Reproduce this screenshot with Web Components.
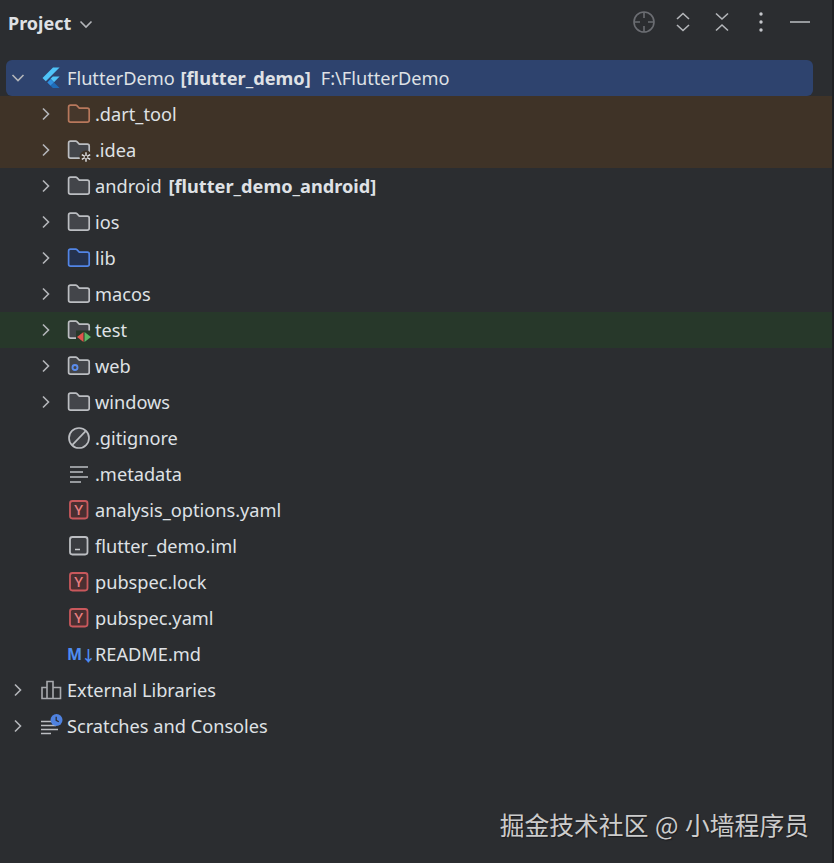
<!DOCTYPE html>
<html>
<head>
<meta charset="utf-8">
<title>Project</title>
<style>
    html, body { height: 100%; }
    body {
        margin: 0;
        background: #2b2d30;
        color: #dfe1e5;
        font-family: "Noto Sans", "Noto Sans CJK SC", sans-serif;
    }
</style>
</head>
<body>
<project-panel>
    <panel-header title-text="Project"></panel-header>
    <tree-row selected expanded icon="flutter" depth="0">FlutterDemo <b style="margin-left:1px">[flutter_demo]</b><span style="margin-left:10px">F:\FlutterDemo</span></tree-row>
    <tree-row chevron icon="folder-orange" depth="1" tint="brown">.dart_tool</tree-row>
    <tree-row chevron icon="folder-idea" depth="1" tint="brown">.idea</tree-row>
    <tree-row chevron icon="folder" depth="1">android <b style="margin-left:2px">[flutter_demo_android]</b></tree-row>
    <tree-row chevron icon="folder" depth="1">ios</tree-row>
    <tree-row chevron icon="folder-blue" depth="1">lib</tree-row>
    <tree-row chevron icon="folder" depth="1">macos</tree-row>
    <tree-row chevron icon="folder-test" depth="1" tint="green">test</tree-row>
    <tree-row chevron icon="folder-web" depth="1">web</tree-row>
    <tree-row chevron icon="folder" depth="1">windows</tree-row>
    <tree-row icon="ignore" depth="1">.gitignore</tree-row>
    <tree-row icon="lines" depth="1">.metadata</tree-row>
    <tree-row icon="yaml" depth="1">analysis_options.yaml</tree-row>
    <tree-row icon="iml" depth="1">flutter_demo.iml</tree-row>
    <tree-row icon="yaml" depth="1">pubspec.lock</tree-row>
    <tree-row icon="yaml" depth="1">pubspec.yaml</tree-row>
    <tree-row icon="markdown" depth="1">README.md</tree-row>
    <tree-row chevron icon="library" depth="0">External Libraries</tree-row>
    <tree-row chevron icon="scratches" depth="0">Scratches and Consoles</tree-row>
    <water-mark slot="overlay">掘金技术社区 @ 小墙程序员</water-mark>
</project-panel>

<script>
const folderPath = "M3.5 3.2h5.2c.5 0 .9.2 1.2.5l2.4 2.4h8c1.1 0 1.9.8 1.9 1.9v10.2c0 1.1-.8 1.9-1.9 1.9H3.5c-1.1 0-1.9-.8-1.9-1.9V5.1c0-1.1.8-1.9 1.9-1.9z";

function folder(stroke, fill, extra = "") {
    return `<path d="${folderPath}" fill="${fill}" stroke="${stroke}" stroke-width="1.7"/>${extra}`;
}

const icons = {
    "flutter": `<path d="M14 1.5h6.6L6.8 15.3l-3.3-3.3z" fill="#4fc3f7"/>
        <path d="M13.8 10.6h6.8l-5.6 5.6-3.4-3.4z" fill="#4fc3f7"/>
        <path d="M8.3 16.4l3.3-3.4 3.4 3.4-3.4 3.3z" fill="#2f8fe0"/>
        <path d="M11.6 19.7l3.4-3.3 5.6 5.6h-6.8z" fill="#1f6cb8"/>`,
    "folder": folder("#bcbec2", "#43454a"),
    "folder-orange": folder("#b8785c", "#46372b"),
    "folder-blue": folder("#5285e6", "#25324d"),
    "folder-idea": folder("#bcbec2", "#43454a",
        `<circle cx="19" cy="19" r="6.5" fill="#3f3327"/>
        <path d="M19 14.2v9.6M14.8 16.6l8.4 4.8M23.2 16.6l-8.4 4.8" stroke="#e4e5e8" stroke-width="1.4"/>
        <circle cx="19" cy="19" r="1.3" fill="#3f3327"/>`),
    "folder-test": folder("#bcbec2", "#43454a",
        `<path d="M9 12.5h15V24H9z" fill="#27382a"/>
        <path d="M16.5 14v10L10 19z" fill="#e0544c"/>
        <path d="M17.5 14v10l6.5-5z" fill="#5cb565"/>`),
    "folder-web": folder("#bcbec2", "#43454a",
        `<circle cx="8" cy="13.5" r="2.5" fill="none" stroke="#5b8def" stroke-width="1.9"/>`),
    "ignore": `<circle cx="12" cy="12" r="10" fill="#3c3e42" stroke="#bcbec2" stroke-width="1.7"/>
        <path d="M5.4 18.9L18.6 5.1" stroke="#bcbec2" stroke-width="1.7"/>`,
    "lines": `<path d="M3 5h18M3 10h13M3 15h18M3 20h11" stroke="#bcbec2" stroke-width="1.6"/>`,
    "yaml": `<rect x="3" y="3" width="17.5" height="17.5" rx="2.4" fill="#4a2f31" stroke="#c9585c" stroke-width="1.8"/>
        <text x="11.75" y="17.4" text-anchor="middle" font-size="15" font-weight="500" fill="#ea8082" font-family="'Noto Sans', sans-serif">Y</text>`,
    "iml": `<rect x="3" y="3" width="17.5" height="17.5" rx="2.4" fill="#3a3c40" stroke="#bcbec2" stroke-width="1.8"/>
        <path d="M8 15.5h5" stroke="#c8cacd" stroke-width="1.5"/>`,
    "library": `<path d="M2 9.5h5v11H2zM7 3.5h6v17H7zM13 9.5h7.5v11H13z" transform="translate(1 0)" fill="none" stroke="#a8aaae" stroke-width="1.6"/>`,
    "scratches": `<path d="M2 7.5h11M2 11.5h15M2 15.5h17M2 19.5h10" stroke="#bcbec2" stroke-width="1.6"/>
        <circle cx="17.5" cy="6" r="6" fill="#4f82e0"/>
        <path d="M17.2 2.8v3.5l2.6 1.5" fill="none" stroke="#2b2d30" stroke-width="1.3"/>`
};

class ProjectPanel extends HTMLElement {
    constructor() {
        super();
        this.attachShadow({mode: "open"});
        this.shadowRoot.innerHTML = `
            <style>
                :host {
                    display: flex;
                    flex-direction: column;
                    position: relative;
                    height: 100%;
                    min-height: 863px;
                    box-sizing: border-box;
                    border-right: 2px solid #1f2023;
                    overflow: hidden;
                }
            </style>
            <slot></slot>
            <slot name="overlay"></slot>
        `;
    }
}

class PanelHeader extends HTMLElement {
    constructor() {
        super();
        this.attachShadow({mode: "open"});
        this.shadowRoot.innerHTML = `
            <style>
                :host {
                    display: flex;
                    align-items: center;
                    height: 48px;
                    margin-bottom: 12px;
                    padding: 0 20px 0 8px;
                    box-sizing: border-box;
                    color: #dfe1e5;
                }
                #title {
                    font-size: 18px;
                    font-weight: 700;
                    margin-bottom: 2px;
                }
                #caret { margin-left: 3px; }
                #actions {
                    display: flex;
                    gap: 15px;
                    margin-left: auto;
                    margin-bottom: 4px;
                }
                svg { display: block; width: 24px; height: 24px; fill: none; stroke: #b4b6ba; stroke-width: 1.6; }
            </style>
            <span id="title"></span>
            <svg id="caret" viewBox="0 0 24 24"><path d="M6.5 9.5l5.5 5.5 5.5-5.5"/></svg>
            <div id="actions">
                <svg viewBox="0 0 24 24" style="stroke:#6b6d72"><circle cx="12" cy="12" r="10"/><path d="M12 2v6M12 16v6M2 12h6M16 12h6"/></svg>
                <svg viewBox="0 0 24 24"><path d="M6 9l6-5.5L18 9M6 15l6 5.5L18 15"/></svg>
                <svg viewBox="0 0 24 24"><path d="M6 3.5L12 9l6-5.5M6 20.5L12 15l6 5.5"/></svg>
                <svg viewBox="0 0 24 24"><circle cx="12" cy="4" r="1.7" fill="#c4c6ca" stroke="none"/><circle cx="12" cy="12" r="1.7" fill="#c4c6ca" stroke="none"/><circle cx="12" cy="20" r="1.7" fill="#c4c6ca" stroke="none"/></svg>
                <svg viewBox="0 0 24 24"><path d="M2 12h20"/></svg>
            </div>
        `;
        this.shadowRoot.getElementById("title").textContent = this.getAttribute("title-text");
    }
}

class TreeRow extends HTMLElement {
    constructor() {
        super();
        this.attachShadow({mode: "open"});
        this.shadowRoot.innerHTML = `
            <style>
                :host {
                    display: flex;
                    align-items: center;
                    flex: none;
                    height: 36px;
                    padding-left: calc(8px + 28px * var(--depth, 0));
                    box-sizing: border-box;
                    font-size: 18.2px;
                    white-space: nowrap;
                    color: #dfe1e5;
                }
                :host([tint="brown"]) { background: #3f3327; }
                :host([tint="green"]) { background: #27382a; }
                :host([selected]) {
                    background: #2e436e;
                    border-radius: 6px;
                    margin: 0 19px 0 6px;
                    padding-left: 2px;
                }
                #chevron { width: 20px; height: 20px; margin-right: 11px; flex: none; }
                #icon { width: 24px; height: 24px; margin-right: 4px; flex: none; }
                #label { line-height: 24px; padding-bottom: 1px; }
                #md {
                    display: flex;
                    align-items: center;
                    width: 28px;
                    flex: none;
                    color: #4f8cf0;
                    font-size: 16px;
                    font-weight: 700;
                }
                #md small { font-size: 15px; margin-left: -1px; }
                svg { display: block; }
            </style>
            <svg id="chevron" viewBox="0 0 20 20" fill="none" stroke="#b4b6ba" stroke-width="1.6"></svg>
            <svg id="icon" viewBox="0 0 24 24" fill="none"></svg>
            <span id="label"><slot></slot></span>
        `;
        this.style.setProperty("--depth", this.getAttribute("depth") || 0);
        const chevron = this.shadowRoot.getElementById("chevron");
        if (this.hasAttribute("expanded")) {
            chevron.innerHTML = `<path d="M4.5 7l5.5 5.5L15.5 7"/>`;
        } else if (this.hasAttribute("chevron")) {
            chevron.innerHTML = `<path d="M7 4.5l5.5 5.5L7 15.5"/>`;
        }
        const icon = this.shadowRoot.getElementById("icon");
        const name = this.getAttribute("icon");
        if (name === "markdown") {
            const md = document.createElement("span");
            md.id = "md";
            md.innerHTML = "M<small>↓</small>";
            icon.replaceWith(md);
        } else {
            icon.innerHTML = icons[name];
        }
    }
}

class WaterMark extends HTMLElement {
    constructor() {
        super();
        this.attachShadow({mode: "open"});
        this.shadowRoot.innerHTML = `
            <style>
                :host {
                    position: absolute;
                    right: 23px;
                    bottom: 21px;
                    font-family: "Noto Sans CJK SC", "Noto Sans", sans-serif;
                    font-size: 24.8px;
                    word-spacing: 1px;
                    white-space: nowrap;
                    color: #cccccc;
                    text-shadow: 1px 1px 1px #1c1c1e;
                }
            </style>
            <slot></slot>
        `;
    }
}

customElements.define("project-panel", ProjectPanel);
customElements.define("panel-header", PanelHeader);
customElements.define("tree-row", TreeRow);
customElements.define("water-mark", WaterMark);
</script>
</body>
</html>
